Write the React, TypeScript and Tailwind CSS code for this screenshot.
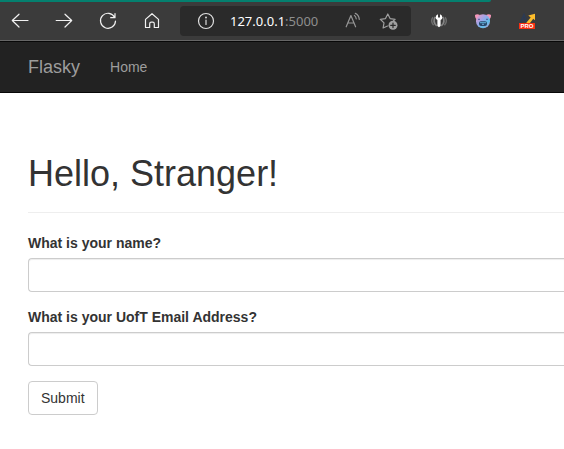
import type { ReactNode } from "react";

function ToolButton({ label, children }: { label: string; children: ReactNode }) {
  return (
    <button type="button" aria-label={label} className="flex h-8 w-11 shrink-0 items-center justify-center text-[#f2f2f2]">
      {children}
    </button>
  );
}

const line = {
  fill: "none",
  stroke: "currentColor",
  strokeWidth: 1.2,
  strokeLinecap: "round" as const,
  strokeLinejoin: "round" as const,
};

function BrowserBar() {
  return (
    <header className="border-b border-[#666] bg-[#3b3b3b]">
      <div className="h-0.5 w-[87%] rounded-br-sm bg-[#04806f]" />
      <div className="flex h-[38px] items-center">
        <ToolButton label="Back">
          <svg className="-ml-1 size-5" viewBox="0 0 20 20" {...line}>
            <path d="M18 9.5H2.6M9 3.2 2.3 9.5 9 16" />
          </svg>
        </ToolButton>
        <ToolButton label="Forward">
          <svg className="-ml-1 size-5" viewBox="0 0 20 20" {...line}>
            <path d="M2.2 9.5h15.4M11 3.2l6.7 6.3L11 16" />
          </svg>
        </ToolButton>
        <ToolButton label="Reload">
          <svg className="-ml-1 size-5" viewBox="0 0 20 20" {...line}>
            <path d="M16.7 6.4A7.5 7.5 0 1 0 17.5 10M17 2.5v4.2h-4.3" />
          </svg>
        </ToolButton>
        <ToolButton label="Home">
          <svg className="-ml-1 size-5" viewBox="0 0 20 20" {...line}>
            <path d="M3.5 8.4 10 2.7l6.5 5.7v8.1h-4.2v-3.7q0-1.6-1.6-1.6H9.3q-1.6 0-1.6 1.6v3.7H3.5Z" />
          </svg>
        </ToolButton>
        <div className="ml-1 flex h-[30px] w-[231px] shrink-0 items-center rounded bg-[#2a2a2a] pr-3 pl-4">
          <svg className="size-5 shrink-0 text-[#e0e0e0]" viewBox="0 0 20 20" {...line}>
            <circle cx="10" cy="10" r="7.5" />
            <path d="M10 9v4.5" />
            <circle cx="10" cy="6.6" r=".4" />
          </svg>
          <span className="ml-3.5 flex-1 font-['Noto_Sans',sans-serif] text-[13px] leading-5 text-white">
            127.0.0.1<span className="text-[#8e8e8e]">:5000</span>
          </span>
          <button type="button" aria-label="Read aloud" className="text-[#969696]">
            <svg className="size-5" viewBox="0 0 20 20" {...line}>
              <path d="m3.2 15.8 4.7-11.3 4.7 11.3M4.9 12h6M11.4 4.5q1.5.8 1.8 3.3M12.3 2.4q3.5 1.5 4 6" />
            </svg>
          </button>
          <button type="button" aria-label="Add to favorites" className="ml-4 text-[#a0a0a0]">
            <svg className="size-5" viewBox="0 0 20 20" {...line}>
              <path d="m8.5 15-4.4 2 .9-5.1-3.7-3.6 5.2-.7L8.8 3l2.3 4.6 5 .7-1.6 1.5" />
              <circle cx="14" cy="14.3" r="4.5" fill="currentColor" stroke="none" />
              <path stroke="#2a2a2a" d="M14 12v4.6M11.7 14.3h4.6" />
            </svg>
          </button>
        </div>
        <div className="ml-1.5 flex">
          <ToolButton label="Password extension">
            <svg className="size-5" viewBox="0 0 20 20" fill="none">
              <path stroke="#6d6d6d" strokeWidth="1.5" d="M4 6.2q-3 4 .6 8M16 6.2q3 4-.6 8" />
              <path stroke="#858585" strokeWidth="1.6" d="M6.2 5.8q-3 5 1.5 9M13.8 5.8q3 5-1.5 9" />
              <path fill="#fff" d="M9 3.2v3.3h2V3.2q2.4.8 2.4 3.2 0 1.8-1.8 2.7v5.8L10 16.2l-1.6-1.3V9.1Q6.6 8.2 6.6 6.4 6.6 4 9 3.2Z" />
            </svg>
          </ToolButton>
          <ToolButton label="Pig extension">
            <svg className="size-5" viewBox="0 0 20 20">
              <defs>
                <linearGradient id="pig" x2="1" y2="1">
                  <stop offset="0" stopColor="#f497be" />
                  <stop offset=".4" stopColor="#9fa5e9" />
                  <stop offset=".7" stopColor="#5ebee8" />
                  <stop offset="1" stopColor="#d991cf" />
                </linearGradient>
              </defs>
              <path fill="#f497b9" d="M2 4q2-1.3 5 0L4.5 8.8Q1.8 7.5 2 4ZM18 4q-2-1.3-5 0l2.5 4.8Q18.2 7.5 18 4Z" />
              <circle cx="10" cy="10.3" r="7" fill="url(#pig)" />
              <rect x="6" y="10.2" width="8" height="4.8" rx="2" fill="#27496b" />
              <path fill="#64b5df" d="M7 11.2h6v1H7Z" />
              <path fill="#78a8dd" d="M9.2 12.8h1.6v1.2H9.2Z" />
              <path fill="#4a5c9c" d="M5.2 7.7h1.6V9H5.2ZM13.2 7.7h1.6V9h-1.6Z" />
            </svg>
          </ToolButton>
          <ToolButton label="Pro extension">
            <svg className="size-5" viewBox="0 0 20 20">
              <path fill="none" stroke="#2c3a52" strokeWidth="2" d="M3.5 12 7 4l3.2 8M5 9.5h4" />
              <path fill="#fdbd2b" d="m9.5 11.5 4.2-5-2.4-2L18 2.8v6.4l-1.8-1.4L13 12H9.5Z" />
              <path fill="#f92f12" d="M2 12h16v6H2Z" />
              <text x="10" y="17" textAnchor="middle" fill="#fff" className="font-['Liberation_Sans',sans-serif] text-[6px] font-bold">PRO</text>
            </svg>
          </ToolButton>
        </div>
      </div>
    </header>
  );
}

function Field({ id, label, type }: { id: string; label: string; type: string }) {
  return (
    <div className="mb-[15px]">
      <label htmlFor={id} className="mb-[5px] block font-bold">{label}</label>
      <input
        id={id}
        type={type}
        className="block h-[34px] w-full rounded-l border border-r-0 border-[#ccc] bg-white px-3 shadow-[inset_0_1px_1px_rgba(0,0,0,0.075)] outline-none"
      />
    </div>
  );
}

export default function App() {
  return (
    <div className="overflow-hidden bg-white font-['Liberation_Sans',Arial,sans-serif] text-sm leading-5 text-[#333]">
      <BrowserBar />
      <nav className="flex h-[52px] items-center gap-[30px] border-y border-[#080808] bg-[#222] pl-7 text-[#9d9d9d]">
        <a href="#" className="text-lg leading-5">Flasky</a>
        <a href="#">Home</a>
      </nav>
      <main className="pt-[61px] pl-7">
        <div className="mb-5 border-b border-[#eee] pb-[18px]">
          <h1 className="text-4xl leading-10 font-normal">Hello, Stranger!</h1>
        </div>
        <form onSubmit={(event) => event.preventDefault()}>
          <Field id="name" label="What is your name?" type="text" />
          <Field id="email" label="What is your UofT Email Address?" type="text" />
          <button type="submit" className="h-[34px] rounded border border-[#ccc] bg-white px-3">
            Submit
          </button>
        </form>
      </main>
    </div>
  );
}
